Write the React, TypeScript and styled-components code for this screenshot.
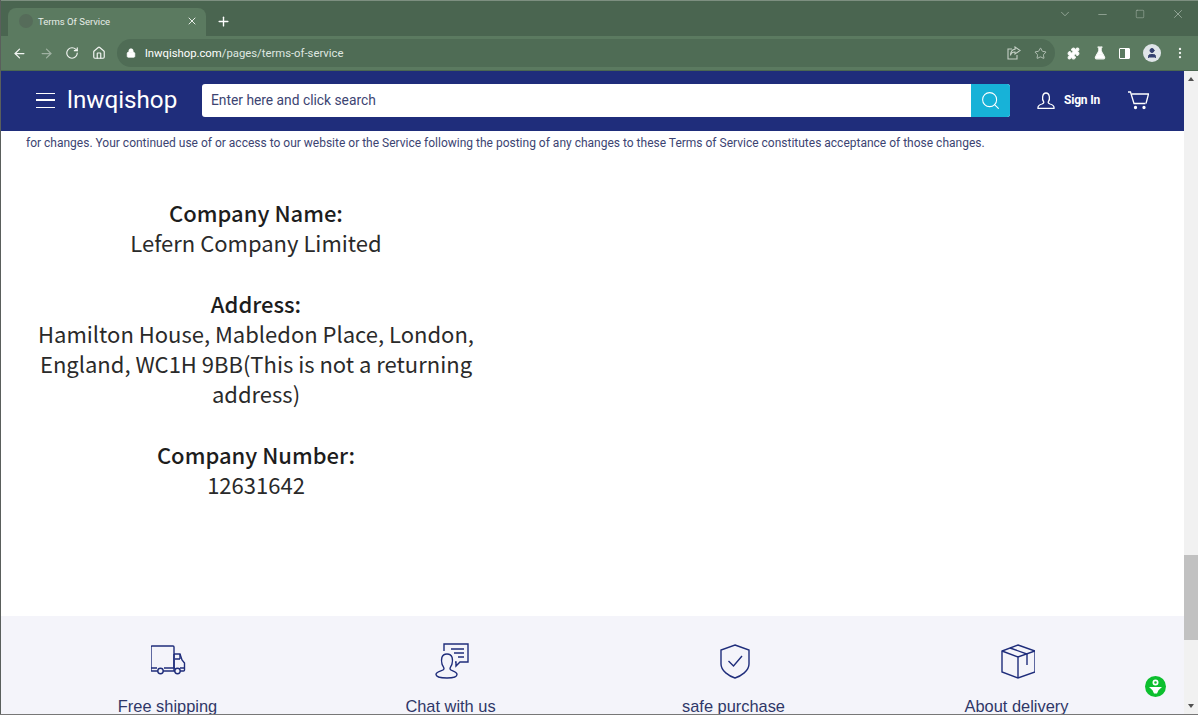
import styled, { createGlobalStyle } from "styled-components";
import { ArrowLeft, ArrowRight, Home, Lock, Minus, MoreVertical, Plus, RotateCw, Square, Star, X, ChevronDown, Search, User, Puzzle, FlaskConical } from "lucide-react";

const GlobalStyle = createGlobalStyle`
  html, body { margin: 0; padding: 0; background: #fff; }
  body { font-family: "Roboto", "Liberation Sans", sans-serif; overflow: hidden; }
`;

const Window = styled.div`
  width: 1198px;
  height: 715px;
  display: flex;
  flex-direction: column;
  overflow: hidden;
  position: relative;
  box-sizing: border-box;
  border-bottom: 1px solid #777;
  background: #fff;
  &::after {
    content: "";
    position: absolute;
    left: 0;
    top: 0;
    bottom: 0;
    width: 1px;
    background: #5a5f5c;
  }
`;

const TabStrip = styled.div`
  height: 36px;
  flex: none;
  background: #4a6550;
  border-top: 1px solid #7d8f80;
  box-sizing: border-box;
  display: flex;
  align-items: flex-end;
  padding-left: 8px;
  color: #fff;
`;

const Tab = styled.div`
  width: 198px;
  height: 28px;
  background: #5b7a60;
  border-radius: 8px 8px 0 0;
  display: flex;
  align-items: center;
  padding: 0 8px 2px 11px;
  box-sizing: border-box;
  font-size: 9.5px;
  color: #e8eee8;
`;

const Favicon = styled.span`
  width: 14px;
  height: 14px;
  border-radius: 50%;
  background: #566c5a;
  margin-right: 5px;
`;

const TabTitle = styled.span`
  flex: 1;
`;

const NewTab = styled.span`
  display: flex;
  margin: 0 0 7px 10px;
`;

const WindowControls = styled.div`
  margin-left: auto;
  align-self: flex-start;
  display: flex;
  align-items: center;
  gap: 26px;
  padding: 6px 13px 0 0;
  color: #c5d0c6;
  & > :first-child {
    margin-right: -2px;
  }
`;

const Toolbar = styled.div`
  height: 34px;
  flex: none;
  background: #5b7a60;
  display: flex;
  align-items: center;
  padding-left: 12px;
  border-bottom: 1px solid #4c6852;
  color: #f2f5f2;
`;

const NavButton = styled.span<{ $dim?: boolean }>`
  display: flex;
  width: 15px;
  margin-right: 11.500px;
  opacity: ${(p) => (p.$dim ? 0.45 : 1)};
`;

const Omnibox = styled.div`
  width: 938px;
  height: 28px;
  margin-left: -1px;
  border-radius: 14px;
  background: #4f6c55;
  display: flex;
  align-items: center;
  padding: 0 8px 0 9px;
  box-sizing: border-box;
  font-size: 11.3px;
  color: #dfe7e0;
`;

const UrlText = styled.span`
  flex: 1;
  margin-left: 9px;
`;

const Host = styled.span`
  color: #fff;
`;

const OmniIcons = styled.span`
  display: flex;
  align-items: center;
  gap: 13px;
  color: #c5d0c6;
`;

const ExtIcons = styled.div`
  display: flex;
  align-items: center;
  gap: 12.5px;
  margin-left: 12px;
`;

const SidePanelIcon = styled.span`
  width: 9px;
  height: 9px;
  border: 1.5px solid #fff;
  background: linear-gradient(90deg, #5b7a60 55%, #fff 55%);
  border-radius: 1px;
`;

const Avatar = styled.span`
  width: 18px;
  height: 18px;
  border-radius: 50%;
  background: #dfe5e8;
  color: #33406e;
  display: flex;
  align-items: center;
  justify-content: center;
`;

const Viewport = styled.div`
  flex: 1;
  min-height: 0;
  display: flex;
`;

const Page = styled.div`
  flex: 1;
  min-width: 0;
  display: flex;
  flex-direction: column;
  overflow: hidden;
`;

const Header = styled.header`
  height: 60px;
  flex: none;
  background: #1f2d7b;
  display: flex;
  align-items: center;
  padding: 0 0 2px 36px;
  box-sizing: border-box;
  color: #fff;
`;

const Burger = styled.span`
  width: 19px;
  height: 13px;
  border-top: 1.5px solid #fff;
  border-bottom: 1.5px solid #fff;
  position: relative;
  margin-right: 12px;
  &::after {
    content: "";
    position: absolute;
    left: 0;
    right: 0;
    top: 5.5px;
    height: 1.5px;
    background: #fff;
  }
`;

const Logo = styled.span`
  font-family: "Roboto", sans-serif;
  font-size: 24.2px;
  width: 135px;
`;

const SearchBox = styled.div`
  width: 808px;
  height: 33px;
  display: flex;
  border-radius: 3px;
  overflow: hidden;
  background: #fff;
`;

const SearchText = styled.span`
  flex: 1;
  font-family: "Roboto", sans-serif;
  font-size: 13.8px;
  line-height: 33px;
  padding-left: 9px;
  color: #3c4472;
`;

const SearchButton = styled.span`
  width: 39px;
  background: #17b2d8;
  display: flex;
  align-items: center;
  justify-content: center;
`;

const SignIn = styled.span`
  display: flex;
  align-items: center;
  margin-left: 27px;
  gap: 9px;
  font-family: "Roboto", sans-serif;
  font-weight: 700;
  font-size: 12px;
  letter-spacing: -0.2px;
`;

const Cart = styled.span`
  display: flex;
  margin-left: 28px;
`;

const Content = styled.main`
  flex: 1;
  min-height: 0;
  padding-left: 26px;
`;

const LegalLine = styled.p`
  margin: 5px 0 0;
  font-family: "Roboto", sans-serif;
  font-size: 12px;
  line-height: 15px;
  color: #3c4472;
  white-space: nowrap;
`;

const CompanyBlock = styled.div`
  width: 460px;
  margin-top: 46px;
  text-align: center;
  font-family: "Noto Sans CJK SC", "Noto Sans", sans-serif;
  font-size: 22px;
  line-height: 30.2px;
  color: #2a2a2a;
`;

const CompanyGroup = styled.div`
  margin-bottom: 30.2px;
`;

const CompanyLabel = styled.div`
  font-weight: 500;
  color: #1d1d1d;
`;

const Footer = styled.footer`
  height: 98px;
  flex: none;
  background: #f4f4fa;
  display: grid;
  grid-template-columns: repeat(4, 283px);
  padding-left: 26px;
  overflow: hidden;
`;

const Feature = styled.div`
  display: flex;
  flex-direction: column;
  align-items: center;
  padding-top: 27px;
  color: #1f2d7b;
`;

const FeatureIcon = styled.span`
  height: 36px;
  display: flex;
  align-items: center;
  margin-left: 2px;
`;

const FeatureLabel = styled.span`
  margin-top: 17px;
  font-family: "Liberation Sans", sans-serif;
  font-size: 16.4px;
  line-height: 20px;
  color: #2f3768;
  white-space: nowrap;
`;

const Scrollbar = styled.div`
  width: 14px;
  flex: none;
  background: #f1f1f1;
  display: flex;
  flex-direction: column;
  align-items: center;
  justify-content: space-between;
  padding: 6px 0;
  box-sizing: border-box;
  position: relative;
`;

const ArrowUp = styled.span`
  border: 3.5px solid transparent;
  border-top: 0;
  border-bottom: 4px solid #505050;
`;

const ArrowDown = styled.span`
  border: 3.5px solid transparent;
  border-bottom: 0;
  border-top: 4px solid #505050;
`;

const Thumb = styled.span`
  position: absolute;
  top: 484px;
  left: 0;
  right: 0;
  height: 85px;
  background: #c1c1c1;
`;

const ChatBubble = styled.span`
  position: absolute;
  left: 1145px;
  top: 676px;
  width: 21px;
  height: 21px;
  border-radius: 50%;
  background: #0cbf2e;
  display: flex;
`;

const ShareGlyph = () => (
  <svg width="14" height="14" viewBox="0 0 14 14" fill="none" stroke="currentColor" strokeWidth="1.1">
    <path d="M5 3H1v10h9V9" />
    <path d="M8 1l5 3.500L8 8V6C5.500 6 4 7 3.500 9.500 3.500 6 5 3.500 8 3.200z" />
  </svg>
);

const AccountIcon = () => (
  <svg width="18" height="17" viewBox="0 0 18 17" fill="none" stroke="currentColor" strokeWidth="1.3">
    <path d="M6.500 9.500C5 7.500 5 1 9 1s4 6.500 2.500 8.500c-.8 1 0 2 1.500 2.500 2 .6 4 1.300 4 3.500v.8H1v-.8c0-2.200 2-2.900 4-3.500 1.500-.5 2.300-1.500 1.500-2.500z" />
  </svg>
);

const CartIcon = () => (
  <svg width="21" height="19" viewBox="0 0 21 19" fill="none" stroke="currentColor" strokeWidth="1.3">
    <path d="M0 1h2.500l3.500 11.500h11.500" />
    <path d="M3.500 3H20.500l-2.500 9.500" />
    <circle cx="7.500" cy="16.500" r="1" fill="currentColor" />
    <circle cx="16" cy="16.500" r="1" fill="currentColor" />
  </svg>
);

const TruckIcon = () => (
  <svg width="36" height="32" viewBox="1 0 36 32" fill="none" stroke="currentColor" strokeWidth="1.4">
    <path d="M8 26H2a1 1 0 0 1-1-1V2a1 1 0 0 1 1-1h21a1 1 0 0 1 1 1v24H13" />
    <path d="M24 9h6l2 6 2.500 3v7a1 1 0 0 1-1 1H30" />
    <path d="M24 26h1M1 23h6M14 23h11M30 23h5M24 9v14" />
    <path d="M25 14h5M30 9v5" />
    <circle cx="10.500" cy="26" r="2.700" />
    <circle cx="27.500" cy="26" r="2.700" />
  </svg>
);

const AgentIcon = () => (
  <svg width="36" height="36" viewBox="0 0 36 36" fill="none" stroke="currentColor" strokeWidth="1.4">
    <path d="M10 8V1h24v18h-8l-4 4v-4h-1" />
    <path d="M17 6h13M20 10h10M24 14h6" />
    <path d="M8 21c-1-4-1-10 5-10s6 6 5 10c-.5 2-2 3-2 5 0 2 7 2 7 5.500 0 2.500-4 3.500-10 3.500S2 34 2 31.500c0-3.500 8-3.500 8-5.500 0-2-1.500-3-2-5z" />
  </svg>
);

const ShieldIcon = () => (
  <svg width="30" height="35" viewBox="0 0 30 35" fill="none" stroke="currentColor" strokeWidth="1.4">
    <path d="M15 1l14 5v14c0 7-8 12-14 14C9 32 1 27 1 20V6z" />
    <path d="M8.500 17l5 5 8.500-10" />
  </svg>
);

const BoxIcon = () => (
  <svg width="35" height="35" viewBox="-1 0 35 35" fill="none" stroke="currentColor" strokeWidth="1.4">
    <path d="M17 1l17 6v21l-17 6-16-6V7z" />
    <path d="M1 7l16 6 17-6M17 13v21" />
    <path d="M9 4l17 6v11" />
  </svg>
);

const BubbleGlyph = () => (
  <svg width="21" height="21" viewBox="0 0 21 21" fill="#fff">
    <path d="M10.500 3.500a3 3 0 1 1 0 6 3 3 0 0 1 0-6zm0 1.700a1.300 1.300 0 1 0 0 2.600 1.300 1.300 0 0 0 0-2.600z" />
    <path d="M4 11h13l-3.500 3.200-1.500 3.300h-3l-1.500-3.300z" />
  </svg>
);

const features = [
  { label: "Free shipping", icon: <TruckIcon /> },
  { label: "Chat with us", icon: <AgentIcon /> },
  { label: "safe purchase", icon: <ShieldIcon /> },
  { label: "About delivery", icon: <BoxIcon /> },
];

const App = () => (
  <Window>
    <GlobalStyle />
    <TabStrip>
      <Tab>
        <Favicon />
        <TabTitle>Terms Of Service</TabTitle>
        <X size={12} strokeWidth={2} />
      </Tab>
      <NewTab>
        <Plus size={15} strokeWidth={2.2} />
      </NewTab>
      <WindowControls>
        <ChevronDown size={14} strokeWidth={1} />
        <Minus size={13} strokeWidth={1} />
        <Square size={10} strokeWidth={1} />
        <X size={14} strokeWidth={1} />
      </WindowControls>
    </TabStrip>
    <Toolbar>
      <NavButton><ArrowLeft size={15} strokeWidth={2} /></NavButton>
      <NavButton $dim><ArrowRight size={15} strokeWidth={2} /></NavButton>
      <NavButton><RotateCw size={14} strokeWidth={2} /></NavButton>
      <NavButton><Home size={14} strokeWidth={2} /></NavButton>
      <Omnibox>
        <Lock size={10} fill="#fff" color="#fff" />
        <UrlText><Host>lnwqishop.com</Host>/pages/terms-of-service</UrlText>
        <OmniIcons>
          <ShareGlyph />
          <Star size={13} strokeWidth={1.5} />
        </OmniIcons>
      </Omnibox>
      <ExtIcons>
        <Puzzle size={13} fill="#fff" />
        <FlaskConical size={14} fill="#fff" />
        <SidePanelIcon />
        <Avatar><User size={12} fill="currentColor" /></Avatar>
        <MoreVertical size={14} />
      </ExtIcons>
    </Toolbar>
    <Viewport>
      <Page>
        <Header>
          <Burger />
          <Logo>lnwqishop</Logo>
          <SearchBox>
            <SearchText>Enter here and click search</SearchText>
            <SearchButton><Search size={21} strokeWidth={1.2} /></SearchButton>
          </SearchBox>
          <SignIn><AccountIcon />Sign In</SignIn>
          <Cart><CartIcon /></Cart>
        </Header>
        <Content>
          <LegalLine>for changes. Your continued use of or access to our website or the Service following the posting of any changes to these Terms of Service constitutes acceptance of those changes.</LegalLine>
          <CompanyBlock>
            <CompanyGroup>
              <CompanyLabel>Company Name:</CompanyLabel>
              Lefern Company Limited
            </CompanyGroup>
            <CompanyGroup>
              <CompanyLabel>Address:</CompanyLabel>
              Hamilton House, Mabledon Place, London,<br />
              England, WC1H 9BB(This is not a returning<br />
              address)
            </CompanyGroup>
            <CompanyGroup>
              <CompanyLabel>Company Number:</CompanyLabel>
              12631642
            </CompanyGroup>
          </CompanyBlock>
        </Content>
        <Footer>
          {features.map((f) => (
            <Feature key={f.label}>
              <FeatureIcon>{f.icon}</FeatureIcon>
              <FeatureLabel>{f.label}</FeatureLabel>
            </Feature>
          ))}
        </Footer>
      </Page>
      <Scrollbar>
        <ArrowUp />
        <Thumb />
        <ArrowDown />
      </Scrollbar>
    </Viewport>
    <ChatBubble><BubbleGlyph /></ChatBubble>
  </Window>
);

export default App;
